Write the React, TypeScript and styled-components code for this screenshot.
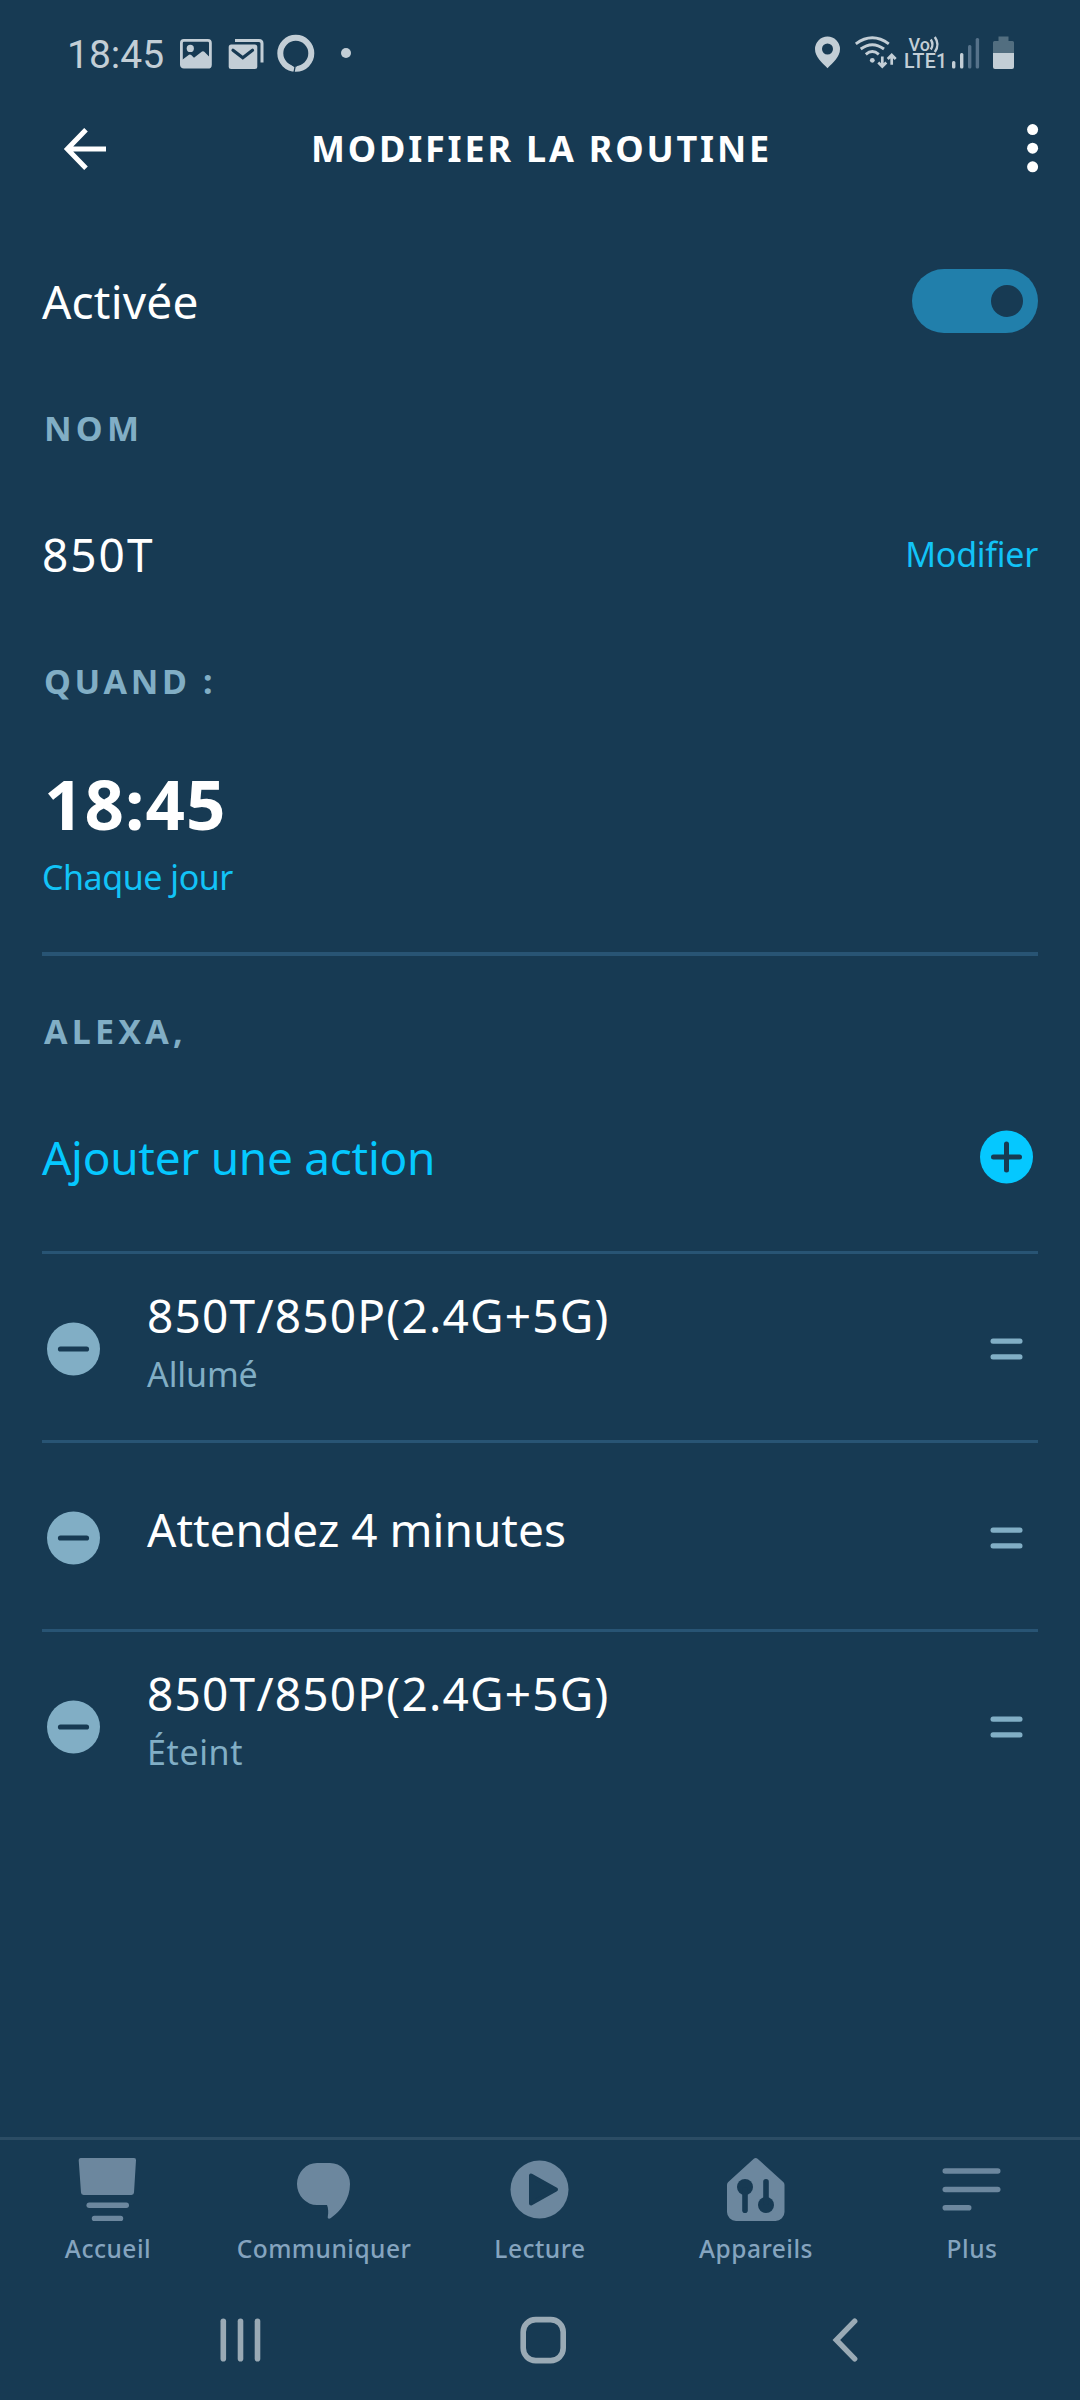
import React from "react";
import styled, { createGlobalStyle } from "styled-components";

const c = {
  bg: "#173a53",
  white: "#ffffff",
  muted: "#81aec5",
  accent: "#05c8ff",
  link: "#12c3f7",
  line: "#285474",
  tab: "#6c879e",
  tabText: "#85a4bf",
  status: "#c3ced6",
  statusDim: "#56728a",
  system: "#9aaab5",
};

const GlobalStyle = createGlobalStyle`
  body { margin: 0; background: ${c.bg}; }
  * { box-sizing: border-box; }
  svg { display: block; flex: none; }
  button { all: unset; display: block; cursor: pointer; }
`;

const Screen = styled.div`
  display: flex;
  flex-direction: column;
  width: 1080px;
  height: 2400px;
  background: ${c.bg};
  color: ${c.white};
  font-family: "Noto Sans", sans-serif;
  white-space: nowrap;
  overflow: hidden;
`;

const StatusBar = styled.div`
  display: flex;
  align-items: center;
  justify-content: space-between;
  height: 106px;
  padding: 0 66px 0 67px;
  color: ${c.status};
`;

const StatusGroup = styled.div`
  display: flex;
  align-items: center;
`;

const Clock = styled.span`
  width: 113px;
  font: 400 39px/46px Roboto, sans-serif;
  padding-top: 3px;
`;

const StatusIcon = styled.svg<{ $before?: number }>`
  margin-left: ${(p) => p.$before ?? 0}px;
  height: 40px;
  overflow: visible;
`;

const Header = styled.header`
  display: grid;
  grid-template-columns: 110px 1fr 110px;
  align-items: center;
  height: 85px;
`;

const BackButton = styled.button`
  padding-left: 63px;
`;

const MenuButton = styled.button`
  justify-self: end;
  padding-right: 41px;
`;

const Title = styled.h1`
  margin: 0;
  padding-left: 3px;
  text-align: center;
  font-size: 36px;
  font-weight: 700;
  line-height: 50px;
  letter-spacing: 2.81px;
`;

const Content = styled.main`
  flex: 1;
  display: flex;
  flex-direction: column;
  padding: 47px 42px 0;
`;

const SettingRow = styled.div<{ $height?: number }>`
  display: flex;
  align-items: center;
  justify-content: space-between;
  height: ${(p) => p.$height ?? 126}px;
`;

const Body = styled.span<{ $track?: number; $color?: string }>`
  font-size: 46px;
  line-height: 60px;
  letter-spacing: ${(p) => p.$track ?? 0}px;
  color: ${(p) => p.$color ?? c.white};
`;

const Small = styled.span<{ $track?: number; $color?: string }>`
  font-size: 34px;
  line-height: 44px;
  letter-spacing: ${(p) => p.$track ?? 0}px;
  color: ${(p) => p.$color ?? c.link};
`;

const SectionLabel = styled.h2<{ $track?: number }>`
  display: flex;
  align-items: center;
  height: 127px;
  margin: 0;
  padding-left: 2px;
  font-size: 34px;
  font-weight: 700;
  letter-spacing: ${(p) => p.$track ?? 4.2}px;
  color: ${c.muted};
`;

const Toggle = styled.div`
  display: flex;
  align-items: center;
  justify-content: flex-end;
  width: 126px;
  height: 64px;
  padding-right: 15px;
  border-radius: 32px;
  background: #217fab;
`;

const Knob = styled.div`
  width: 32px;
  height: 32px;
  border-radius: 50%;
  background: ${c.bg};
`;

const Schedule = styled.div`
  display: flex;
  flex-direction: column;
  height: 212px;
  padding-top: 19px;
  border-bottom: 4px solid ${c.line};
`;

const Time = styled.span`
  padding-left: 2px;
  font-size: 69px;
  font-weight: 700;
  line-height: 80px;
  letter-spacing: 1.05px;
`;

const Frequency = styled(Small)`
  margin-top: 12px;
`;

const AlexaLabel = styled(SectionLabel)`
  margin-top: 12px;
  height: 126px;
`;

const AddRow = styled(SettingRow)`
  padding-right: 5px;
  margin-bottom: 32px;
`;

const ActionRow = styled.div`
  display: flex;
  align-items: center;
  height: 189px;
  padding: 3px 15px 0 5px;
  border-top: 3px solid ${c.line};
`;

const ActionText = styled.div<{ $top: number }>`
  flex: 1;
  display: flex;
  flex-direction: column;
  gap: 7px;
  align-self: flex-start;
  padding: ${(p) => p.$top}px 0 0 46px;
`;

const TabBar = styled.nav`
  display: grid;
  grid-template-columns: repeat(5, 1fr);
  height: 142px;
  padding-top: 17px;
  border-top: 3px solid #2b4c64;
`;

const Tab = styled.div`
  display: flex;
  flex-direction: column;
  align-items: center;
  gap: 9px;
`;

const TabLabel = styled.span`
  font-size: 24.5px;
  font-weight: 500;
  line-height: 34px;
  letter-spacing: 0.5px;
  color: ${c.tabText};
`;

const SystemBar = styled.div`
  display: grid;
  grid-template-columns: repeat(3, 302px);
  align-items: center;
  justify-items: center;
  height: 121px;
  padding-left: 90px;
`;

const TabSvg = ({ children }: { children: React.ReactNode }) => (
  <svg width="64" height="66" viewBox="0 0 64 66" fill={c.tab}>
    {children}
  </svg>
);

const tabs = [
  {
    label: "Accueil",
    icon: (
      <>
        <path d="M4.500 1H58a2 2 0 0 1 2 2.200L58 35.600a2.500 2.500 0 0 1-2.500 2.400H7.500A2.500 2.500 0 0 1 5 35.600L2.700 3.200A2 2 0 0 1 4.500 1Z" />
        <rect x="10.500" y="45.500" width="42.500" height="5.500" rx="2.700" />
        <rect x="15.800" y="58.700" width="31.400" height="5.300" rx="2.600" />
      </>
    ),
  },
  {
    label: "Communiquer",
    icon: (
      <path d="M25 6H38A20 21 0 0 1 58 27C58 42 49 54 38.500 61.300C36.800 62.400 35.400 61.500 35.800 59.500C36.600 55.500 36.300 51 35 48H25A20 21 0 0 1 25 6Z" />
    ),
  },
  {
    label: "Lecture",
    icon: (
      <>
        <circle cx="31.500" cy="32.500" r="29" />
        <path
          d="M23 18.500V46.500L48 32.500Z"
          fill={c.bg}
          stroke={c.bg}
          strokeWidth="4"
          strokeLinejoin="round"
        />
      </>
    ),
  },
  {
    label: "Appareils",
    icon: (
      <>
        <path d="M29.800 1.800Q31.700 0 33.600 1.800L59.500 25.300Q60.500 26.200 60.500 28V55a9 9 0 0 1-9 9H12a9 9 0 0 1-9-9V28Q3 26.200 4 25.300Z" />
        <g fill={c.bg}>
          <circle cx="21" cy="30" r="8" />
          <rect x="18.200" y="30" width="5.600" height="26" rx="2.800" />
          <circle cx="42" cy="48" r="8" />
          <rect x="39.200" y="22" width="5.600" height="26" rx="2.800" />
        </g>
      </>
    ),
  },
  {
    label: "Plus",
    icon: (
      <>
        <rect x="2.500" y="11.200" width="58" height="5.600" rx="2.800" />
        <rect x="2.500" y="29.700" width="58" height="5.600" rx="2.800" />
        <rect x="2.500" y="48" width="29" height="5.600" rx="2.800" />
      </>
    ),
  },
];

const actions = [
  { title: "850T/850P(2.4G+5G)", track: 1.22, detail: "Allumé", detailTrack: -0.1 },
  { title: "Attendez 4 minutes", track: 0 },
  { title: "850T/850P(2.4G+5G)", track: 1.22, detail: "Éteint", detailTrack: 0.6 },
];

const RemoveIcon = () => (
  <svg width="54" height="54" viewBox="0 0 54 54">
    <circle cx="26.500" cy="27" r="26.500" fill={c.muted} />
    <path d="M13.500 27H39.500" stroke={c.bg} strokeWidth="5.200" strokeLinecap="round" />
  </svg>
);

const DragIcon = () => (
  <svg width="33" height="22" viewBox="0 0 33 22" fill={c.muted}>
    <rect x="0.500" y="0.500" width="32" height="5.200" rx="2.500" />
    <rect x="0.500" y="16.300" width="32" height="5.200" rx="2.500" />
  </svg>
);

export default function App() {
  return (
    <Screen>
      <GlobalStyle />
      <StatusBar>
        <StatusGroup>
          <Clock>18:45</Clock>
          <StatusIcon width="32" viewBox="0 0 32 40">
            <rect x="1.400" y="7.400" width="29" height="26.800" rx="2.500" fill="none" stroke={c.status} strokeWidth="2.800" />
            <circle cx="10.300" cy="15.400" r="3.600" fill={c.status} />
            <path d="M2 27L9 21.700Q10.200 21 11.200 22L14 24.800L22 18.600Q23.200 17.800 24.300 18.800L30 24.500V34H2Z" fill={c.status} />
          </StatusIcon>
          <StatusIcon width="37" viewBox="0 0 37 40" $before={16} fill="none">
            <path d="M7 7.500H31Q34 7.500 34 10.500V29.500" stroke={c.status} strokeWidth="3" />
            <rect x="0.700" y="11.500" width="28.600" height="24.500" rx="2.500" fill={c.status} />
            <path d="M5 17.200L14.800 24.800L24.500 17.200" stroke={c.bg} strokeWidth="3.200" strokeLinecap="round" />
          </StatusIcon>
          <StatusIcon width="38" viewBox="0 0 38 40" $before={12} fill="none">
            <circle cx="18.800" cy="20.300" r="15.500" stroke={c.status} strokeWidth="6" />
            <path d="M15 31.500L18 34L17 39.500" stroke={c.bg} strokeWidth="1.300" />
            <path d="M13.500 31.500L19 34L22 31.500Z" fill={c.bg} />
          </StatusIcon>
          <StatusIcon width="10" viewBox="0 0 10 40" $before={26} fill={c.status}>
            <circle cx="5" cy="20" r="5" />
          </StatusIcon>
        </StatusGroup>
        <StatusGroup>
          <StatusIcon width="25" viewBox="0 0 25 40" fill={c.status}>
            <path
              fillRule="evenodd"
              d="M12.500 3.500A12.500 12.500 0 0 0 0 16C0 24 7 29.500 12.500 35.200C18 29.500 25 24 25 16A12.500 12.500 0 0 0 12.500 3.500ZM12.500 10.500A5.500 5.500 0 1 1 12.500 21.500A5.500 5.500 0 1 1 12.500 10.500Z"
            />
          </StatusIcon>
          <StatusIcon width="43" viewBox="0 0 43 40" $before={14} fill="none" stroke={c.status} strokeWidth="2.900">
            <path d="M1.800 10.800Q18.300-1.300 34.800 10.800M6.700 16Q18.300 7.300 30 16M11.800 21.300Q18.300 15.800 24.800 21.300" />
            <circle cx="18.300" cy="27.300" r="2.400" fill={c.status} stroke="none" />
            <path d="M28.300 23.500V33M24.300 29.500L28.300 33.500L32.300 29.500M37.700 31.700V22.500M33.700 26L37.700 22L41.700 26" strokeWidth="2.700" />
          </StatusIcon>
          <StatusIcon width="46" viewBox="0 0 46 40" $before={5} fill={c.status} fontFamily="Roboto, sans-serif" fontWeight="500">
            <text x="6.500" y="18" fontSize="18">Vo</text>
            <path d="M28.800 6.500Q32.100 11.500 28.800 16.500M32.800 4Q38.100 11.500 32.800 19" fill="none" stroke={c.status} strokeWidth="2.400" />
            <text x="2" y="35" fontSize="19.500" letterSpacing="0.300">LTE1</text>
          </StatusIcon>
          <StatusIcon width="30" viewBox="0 0 30 40" $before={2} fill={c.status}>
            <rect x="2" y="28" width="3.400" height="7.500" rx="1.500" />
            <rect x="10" y="20" width="3.400" height="15.500" rx="1.500" />
            <rect x="18" y="12" width="3.400" height="23.500" rx="1.500" fill={c.statusDim} />
            <rect x="25.700" y="5" width="3.400" height="30.500" rx="1.500" fill={c.statusDim} />
          </StatusIcon>
          <StatusIcon width="21" viewBox="0 0 21 40" $before={13}>
            <path d="M5.500 3.500H15.500V8H19.500Q21 8 21 9.500V20H0V9.500Q0 8 1.500 8H5.500Z" fill="#526e80" />
            <path d="M0 20H21V34Q21 36 19 36H2Q0 36 0 34Z" fill={c.status} />
          </StatusIcon>
        </StatusGroup>
      </StatusBar>

      <Header>
        <BackButton aria-label="Retour">
          <svg width="43" height="42" viewBox="0 0 43 42" fill="none" stroke={c.white} strokeWidth="5">
            <path d="M23 1.700L4.300 21L23 40.300M5 21H43" />
          </svg>
        </BackButton>
        <Title>MODIFIER LA ROUTINE</Title>
        <MenuButton aria-label="Options">
          <svg width="12" height="49" viewBox="0 0 12 49" fill={c.white}>
            <circle cx="5.600" cy="5.600" r="5.500" />
            <circle cx="5.600" cy="24.200" r="5.500" />
            <circle cx="5.600" cy="42.800" r="5.500" />
          </svg>
        </MenuButton>
      </Header>

      <Content>
        <SettingRow>
          <Body $track={0.2}>Activée</Body>
          <Toggle role="switch" aria-checked="true">
            <Knob />
          </Toggle>
        </SettingRow>

        <SectionLabel>NOM</SectionLabel>
        <SettingRow>
          <Body $track={2}>850T</Body>
          <Small $track={-0.25}>Modifier</Small>
        </SettingRow>

        <SectionLabel $track={3.64}>QUAND :</SectionLabel>
        <Schedule>
          <Time>18:45</Time>
          <Frequency $track={-0.45}>Chaque jour</Frequency>
        </Schedule>

        <AlexaLabel>ALEXA,</AlexaLabel>
        <AddRow $height={125}>
          <Body $track={-0.29} $color={c.accent}>Ajouter une action</Body>
          <svg width="54" height="54" viewBox="0 0 54 54">
            <circle cx="27.500" cy="27" r="26.500" fill={c.accent} />
            <path d="M14.500 27H40.500M27.500 14V40" stroke={c.bg} strokeWidth="5" strokeLinecap="round" />
          </svg>
        </AddRow>

        {actions.map((a, i) => (
          <ActionRow key={i}>
            <RemoveIcon />
            <ActionText $top={a.detail ? 28 : 53}>
              <Body $track={a.track}>{a.title}</Body>
              {a.detail && (
                <Small $track={a.detailTrack} $color={c.muted}>
                  {a.detail}
                </Small>
              )}
            </ActionText>
            <DragIcon />
          </ActionRow>
        ))}
      </Content>

      <TabBar>
        {tabs.map((t) => (
          <Tab key={t.label}>
            <TabSvg>{t.icon}</TabSvg>
            <TabLabel>{t.label}</TabLabel>
          </Tab>
        ))}
      </TabBar>

      <SystemBar>
        <svg width="42" height="44" viewBox="0 0 42 44" fill={c.system}>
          <rect x="0.500" y="0.500" width="5.600" height="43" rx="2.800" />
          <rect x="17.700" y="0.500" width="5.600" height="43" rx="2.800" />
          <rect x="34.700" y="0.500" width="5.600" height="43" rx="2.800" />
        </svg>
        <svg width="47" height="48" viewBox="0 0 47 48" fill="none">
          <rect x="3.200" y="3.600" width="40" height="41" rx="12.500" stroke={c.system} strokeWidth="5.600" />
        </svg>
        <svg width="26" height="44" viewBox="0 0 26 44" fill="none">
          <path d="M22.700 3.200L4.300 22L22.700 40.800" stroke={c.system} strokeWidth="5.400" strokeLinecap="round" />
        </svg>
      </SystemBar>
    </Screen>
  );
}
